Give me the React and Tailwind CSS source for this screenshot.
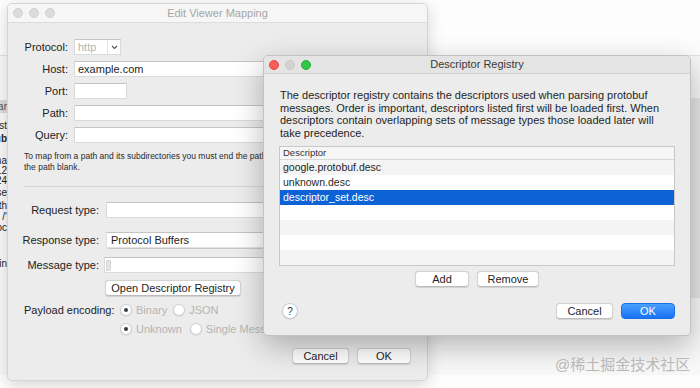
import React from 'react';

function Field({ className = '', children }) {
  return (
    <div className={`h-[16px] bg-white border border-[#dadada] border-t-[#c4c4c4] flex items-center px-[3px] text-[11px] text-[#1e1e1e] whitespace-nowrap overflow-hidden ${className}`}>
      {children}
    </div>
  );
}

function Button({ className = '', children }) {
  return (
    <div className={`h-[16px] bg-white rounded-[4px] border border-[#d2d2d2] border-b-[#bcbcbc] shadow-[0_0.5px_1px_rgba(0,0,0,0.12)] flex items-center justify-center text-[11px] text-[#1e1e1e] ${className}`}>
      {children}
    </div>
  );
}

function Radio({ checked, label }) {
  return (
    <div className="h-[14px] flex items-center gap-[4px]">
      <span className="w-[12px] h-[12px] rounded-full bg-white border border-[#d0d0d0] shadow-[0_0.5px_1px_rgba(0,0,0,0.15)] flex items-center justify-center">
        {checked && <span className="w-[4px] h-[4px] rounded-full bg-[#3c3c3c]" />}
      </span>
      <span className="text-[11px] leading-[14px] text-[#b4b4b4] whitespace-nowrap">{label}</span>
    </div>
  );
}

function Label({ children }) {
  return <span className="w-[75px] flex justify-end whitespace-nowrap leading-[16px]">{children}</span>;
}

function BackWindow() {
  return (
    <div className="absolute left-[7px] top-[3px] w-[421px] h-[378px] rounded-[5px] bg-[#ececec] border border-[#d4d4d4] shadow-[0_4px_16px_rgba(0,0,0,0.16)] flex flex-col overflow-hidden">
      <div className="relative h-[19px] bg-[#f6f6f6] border-b border-[#dcdcdc] flex items-center justify-center shrink-0">
        <div className="absolute left-[5px] top-[4px] flex gap-[6px]">
          <span className="w-[10px] h-[10px] rounded-full bg-[#dcdcdc] border border-[#d0d0d0]" />
          <span className="w-[10px] h-[10px] rounded-full bg-[#dcdcdc] border border-[#d0d0d0]" />
          <span className="w-[10px] h-[10px] rounded-full bg-[#dcdcdc] border border-[#d0d0d0]" />
        </div>
        <span className="text-[11px] text-[#a6a6a6]">Edit Viewer Mapping</span>
      </div>

      <div className="flex-1 min-h-0 flex flex-col px-[16px] pt-[16px] pb-[16px] text-[11px] text-[#222]">
        <div className="grid grid-cols-[44px_1fr] gap-x-[6px] gap-y-[6px] items-center">
          <span className="text-right leading-[16px]">Protocol:</span>
          <div className="w-[47px] h-[16px] bg-white border border-[#dadada] border-t-[#c4c4c4] flex">
            <span className="flex-1 pl-[3px] text-[11px] leading-[14px] text-[#b4b4b4]">http</span>
            <span className="w-[13px] border-l border-[#e2e2e2] flex items-center justify-center">
              <svg width="7" height="5" viewBox="0 0 7 5"><path d="M1 1l2.5 2.5L6 1" fill="none" stroke="#555" strokeWidth="1.1" /></svg>
            </span>
          </div>
          <span className="text-right leading-[16px]">Host:</span>
          <Field>example.com</Field>
          <span className="text-right leading-[16px]">Port:</span>
          <Field className="w-[53px]" />
          <span className="text-right leading-[16px]">Path:</span>
          <Field />
          <span className="text-right leading-[16px]">Query:</span>
          <Field />
        </div>

        <div className="mt-[8px] text-[8.5px] leading-[11px] text-[#2a2a2a] whitespace-nowrap">
          <div>To map from a path and its subdirectories you must end the path with a /* to match all paths leave</div>
          <div>the path blank.</div>
        </div>

        <div className="mt-[13px] h-px bg-[#d6d6d6]" />

        <div className="mt-[15px] flex flex-col">
          <div className="flex items-center gap-[7px]">
            <Label>Request type:</Label>
            <Field className="flex-1" />
          </div>
          <div className="mt-[14px] flex items-center gap-[7px]">
            <Label>Response type:</Label>
            <Field className="flex-1 border-[#e2e2e2] shadow-[0_0.5px_1px_rgba(0,0,0,0.15)] pl-[4px]">Protocol Buffers</Field>
          </div>
          <div className="mt-[9px] flex items-center gap-[5px]">
            <Label>Message type:</Label>
            <Field className="flex-1 h-[15px] pl-[1px]">
              <span className="w-[5px] h-[11px] bg-[#e4e4e4] border border-[#d6d6d6] rounded-[1px]" />
            </Field>
          </div>
          <Button className="mt-[7px] ml-[81px] w-[136px]">Open Descriptor Registry</Button>
          <div className="mt-[7px] flex">
            <span className="w-[96px] leading-[14px] whitespace-nowrap">Payload encoding:</span>
            <div className="flex flex-col gap-[5px]">
              <div className="flex items-center gap-[6px]">
                <Radio checked label="Binary" />
                <Radio label="JSON" />
              </div>
              <div className="flex items-center gap-[8px]">
                <Radio checked label="Unknown" />
                <Radio label="Single Message" />
              </div>
            </div>
          </div>
        </div>

        <div className="mt-auto flex justify-end gap-[8px]">
          <Button className="w-[57px]">Cancel</Button>
          <Button className="w-[54px]">OK</Button>
        </div>
      </div>
    </div>
  );
}

function Dialog() {
  const rows = [
    { name: 'google.protobuf.desc' },
    { name: 'unknown.desc' },
    { name: 'descriptor_set.desc', selected: true },
    { name: '' },
    { name: '' },
    { name: '' },
    { name: '' },
  ];
  return (
    <div className="absolute left-[263px] top-[55px] w-[428px] h-[281px] rounded-[5px] bg-[#ececec] border border-[#c2c2c2] shadow-[0_10px_30px_rgba(0,0,0,0.28)] flex flex-col overflow-hidden">
      <div className="relative h-[18px] bg-[#e4e4e4] border-b border-[#d0d0d0] flex items-center justify-center shrink-0">
        <div className="absolute left-[5px] top-[4px] flex gap-[6px]">
          <span className="w-[10px] h-[10px] rounded-full bg-[#fc5f57] border border-[#e2463f]" />
          <span className="w-[10px] h-[10px] rounded-full bg-[#d2d2d2] border border-[#c6c6c6]" />
          <span className="w-[10px] h-[10px] rounded-full bg-[#33c748] border border-[#27aa35]" />
        </div>
        <span className="text-[11px] text-[#3a3a3a]">Descriptor Registry</span>
      </div>

      <div className="flex-1 flex flex-col px-[15px] pt-[15px] pb-[16px] text-[#1f1f1f]">
        <div className="ml-[1px] text-[11px] leading-[12.7px] whitespace-nowrap">
          <div>The descriptor registry contains the descriptors used when parsing protobuf</div>
          <div>messages. Order is important, descriptors listed first will be loaded first. When</div>
          <div>descriptors contain overlapping sets of message types those loaded later will</div>
          <div>take precedence.</div>
        </div>

        <div className="mt-[6px] border border-[#c8c8c8] bg-white">
          <div className="h-[13px] bg-[#f6f6f6] border-b border-[#d8d8d8] pl-[3px] flex items-center text-[9.5px] leading-[11px] text-[#333]">Descriptor</div>
          {rows.map((r, i) => (
            <div
              key={i}
              className={`h-[15px] pl-[3px] text-[10.5px] leading-[15px] ${r.selected ? 'bg-[#0d62d6] text-white' : i % 2 === 0 ? 'bg-[#f4f4f4]' : 'bg-white'}`}
            >
              {r.name}
            </div>
          ))}
        </div>

        <div className="mt-[5px] flex justify-center gap-[8px]">
          <Button className="w-[54px]">Add</Button>
          <Button className="w-[62px]">Remove</Button>
        </div>

        <div className="mt-auto flex items-center">
          <div className="ml-[3px] w-[16px] h-[16px] rounded-full bg-white border border-[#cfcfcf] shadow-[0_0.5px_1px_rgba(0,0,0,0.15)] flex items-center justify-center text-[10px] text-[#333]">?</div>
          <div className="flex-1" />
          <Button className="w-[57px]">Cancel</Button>
          <div className="ml-[8px] w-[54px] h-[16px] rounded-[4px] bg-gradient-to-b from-[#4aa0fd] to-[#1672f5] border border-[#1a6fe8] flex items-center justify-center text-[11px] text-white">OK</div>
        </div>
      </div>
    </div>
  );
}

function FarWindow() {
  return (
    <div className="absolute left-0 top-[55px] w-[700px] h-[320px] bg-[#f8f8f8] border-t border-[#e2e2e2]">
      <div className="mt-[44px] h-[13px] bg-[#dadada] text-[10px] leading-[13px] text-[#555] flex justify-end w-[7px] overflow-hidden whitespace-nowrap">ar</div>
      <div className="w-[7px] overflow-hidden text-[10px] leading-[10px] text-[#1e1e1e] flex flex-col items-end whitespace-nowrap">
        <div className="mt-[8px]">Host</div>
        <div className="mt-[3px] font-bold">Sub</div>
        <div className="mt-[12px]">ma</div>
        <div>12</div>
        <div>24</div>
        <div className="mt-[2px]">se</div>
        <div className="mt-[3px]">th</div>
        <div className="mt-[1px]">/'</div>
        <div className="mt-[1px]">oc</div>
        <div className="mt-[26px]">in</div>
      </div>
      <div className="absolute right-0 top-[42px] w-[10px] h-[200px] bg-[#e6e6e6]" />
    </div>
  );
}

export default function App() {
  return (
    <div className="relative w-[700px] h-[388px] overflow-hidden bg-[#fdfdfd] font-['Liberation_Sans',Arial,sans-serif]">
      <FarWindow />
      <BackWindow />
      <Dialog />
      <div className="absolute left-[555px] top-[355px] text-[15px] leading-[20px] text-[#b8b8b8] font-['Liberation_Sans','Noto_Sans_CJK_SC',sans-serif]">
        @稀土掘金技术社区
      </div>
    </div>
  );
}
